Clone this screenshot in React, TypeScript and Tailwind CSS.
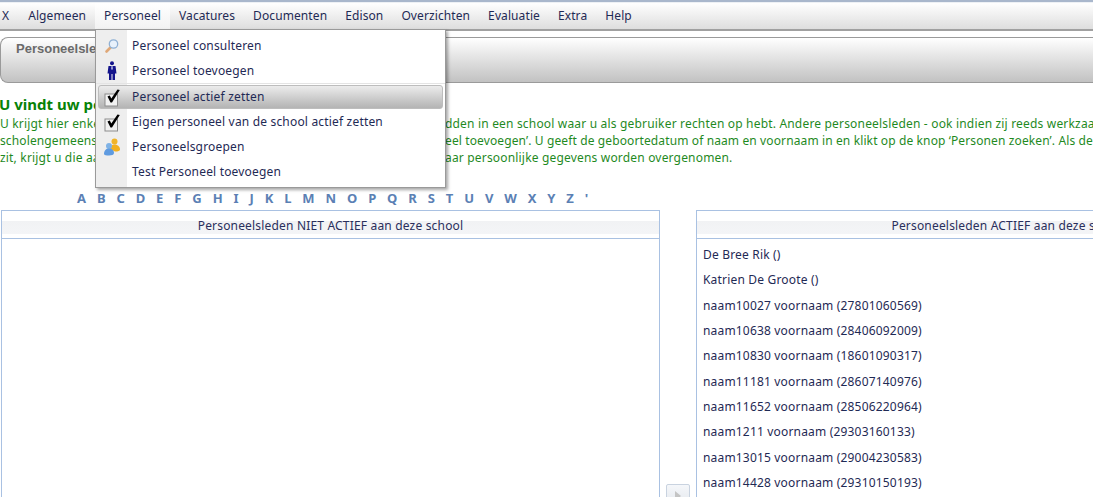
import React from "react";

const nav = ["X", "Algemeen", "Personeel", "Vacatures", "Documenten", "Edison", "Overzichten", "Evaluatie", "Extra", "Help"];
const letters = "A B C D E F G H I J K L M N O P Q R S T U V W X Y Z '".split(" ");
const people = [
  "De Bree Rik ()",
  "Katrien De Groote ()",
  "naam10027 voornaam (27801060569)",
  "naam10638 voornaam (28406092009)",
  "naam10830 voornaam (18601090317)",
  "naam11181 voornaam (28607140976)",
  "naam11652 voornaam (28506220964)",
  "naam1211 voornaam (29303160133)",
  "naam13015 voornaam (29004230583)",
  "naam14428 voornaam (29310150193)",
];

function Magnifier() {
  return (
    <svg width="16" height="16" viewBox="0 0 16 16">
      <path d="M6.500 9.500 2.500 13.500" stroke="#dfa878" strokeWidth="2.600" strokeLinecap="round" />
      <circle cx="9.500" cy="6" r="4.200" fill="#e8f1fb" stroke="#8fb0d4" strokeWidth="1.300" />
    </svg>
  );
}
function Man() {
  return (
    <svg width="10" height="19" viewBox="0 0 10 19">
      <circle cx="5" cy="2.200" r="2" fill="#14148c" />
      <path d="M1.500 5h7l1 7.500H8V19H5.500v-6h-1v6H2v-6.500H.5z" fill="#14148c" />
      <path d="M4.500 4.800h1l.3 3.600H4.200z" fill="#c8cdec" />
    </svg>
  );
}
function Check() {
  return (
    <svg width="18" height="20" viewBox="0 0 18 20">
      <rect x="2" y="7" width="12.500" height="12" fill="#f2f2f2" stroke="#8c8c8c" />
      <path d="M4.500 9.500 6.800 8.500 8.300 11.500 14.500 2.500 16.800 3 9 15.500H7.500z" fill="#000" />
    </svg>
  );
}
function Group() {
  return (
    <svg width="18" height="18" viewBox="0 0 18 18">
      <circle cx="11.500" cy="3.500" r="3" fill="#f0b429" />
      <path d="M7 11c0-3 2-4.500 4.500-4.500S17 8 17 11.500c0 1.500-2 2-5 2z" fill="#f2b01e" />
      <circle cx="6" cy="8" r="3" fill="#7fb2e5" />
      <path d="M1 16c0-3.500 2-5.500 5-5.500s5 2 5 4.500c0 1.800-2.500 2.500-5 2.500s-5-.5-5-1.500z" fill="#5f9be0" />
    </svg>
  );
}

const menu: { icon: React.ReactNode; label: string; active?: boolean }[] = [
  { icon: <Magnifier />, label: "Personeel consulteren" },
  { icon: <Man />, label: "Personeel toevoegen" },
  { icon: <Check />, label: "Personeel actief zetten", active: true },
  { icon: <Check />, label: "Eigen personeel van de school actief zetten" },
  { icon: <Group />, label: "Personeelsgroepen" },
  { icon: null, label: "Test Personeel toevoegen" },
];

function PanelHeader({ title }: { title: string }) {
  return (
    <div className="h-[28px] border-b border-[#a9c1e2] pt-[10px]">
      <div className="h-[13px] bg-gradient-to-b from-[#f1f2f4] to-[#f4f5f7] text-center text-[12px] leading-[9px] text-[#2a2f5c]">
        {title}
      </div>
    </div>
  );
}

export default function App() {
  return (
    <div className="relative h-[497px] w-full overflow-hidden bg-white font-['Noto_Sans',sans-serif] text-[12px] tracking-[0.18px] text-[#1f2a55]">
      <div className="h-[3px] border-t-2 border-[#a9b7cc] bg-[#eef1f5]" />
      <nav className="flex h-[28px] items-center border-b-2 border-[#a0a0a0] bg-gradient-to-b from-white to-[#dedede] pl-[2px] tracking-[0.1px]">
        {nav.map((n, i) => (
          <span
            key={n}
            className={
              n === "Personeel"
                ? "flex h-full items-center bg-gradient-to-b from-white to-[#f2f2f2] px-[9px]"
                : i === 0
                  ? "mr-[10px] flex h-full items-center"
                  : "flex h-full items-center px-[9px]"
            }
          >
            {n}
          </span>
        ))}
      </nav>

      <div className="mt-[6px] h-[46px] rounded-l-[8px] border-y border-l border-[#9a9a9a] bg-gradient-to-b from-white to-[#c2c2c2] pl-[15px] pt-[1px] font-['Liberation_Sans',sans-serif] text-[13px] font-bold tracking-normal text-[#6a6a6a]">
        Personeelsleden
      </div>

      <div className="mt-[11px] whitespace-nowrap text-[#1f8a1f]">
        <h1 className="ml-[-1px] text-[15px] leading-[21px] font-bold tracking-normal text-[#078207]">U vindt uw personeelsleden</h1>
        <p className="leading-[17px]">
          <span className="inline-block w-[445px] overflow-hidden align-bottom">U krijgt hier enkel de personeelsleden te zien die opdrachten</span>
          dden in een school waar u als gebruiker rechten op hebt. Andere personeelsleden - ook indien zij reeds werkzaam zijn
        </p>
        <p className="leading-[17px] tracking-[0.12px]">
          <span className="inline-block w-[445px] overflow-hidden align-bottom">scholengemeenschap - moet u eerst opzoeken via personeel</span>
          eel toevoegen’. U geeft de geboortedatum of naam en voornaam in en klikt op de knop ‘Personen zoeken’. Als de
        </p>
        <p className="leading-[17px]">
          <span className="inline-block w-[445px] overflow-hidden align-bottom">zit, krijgt u die aanduiding en kunnen zijn of haar gegevens</span>
          aar persoonlijke gegevens worden overgenomen.
        </p>
      </div>

      <div className="ml-[271px] mt-[2px] h-[19px] w-[141px] border border-[#a9c1e2]" />

      <div className="mt-[2px] flex h-[19px] items-center gap-[10.9px] pl-[77px] text-[13px] font-bold tracking-normal text-[#5b80b4]">
        {letters.map((l) => (
          <span key={l}>{l}</span>
        ))}
      </div>

      <div className="mt-[2px] flex items-stretch">
        <section className="ml-px h-[300px] w-[659px] shrink-0 border border-[#a9c1e2]">
          <PanelHeader title="Personeelsleden NIET ACTIEF aan deze school" />
        </section>
        <div className="flex w-[36px] shrink-0 justify-center pt-[274px]">
          <button className="flex h-[24px] w-[24px] items-center justify-center rounded-[2px] border border-[#c9d3e0] bg-gradient-to-b from-[#f5f7fa] to-[#e2e6ec]">
            <svg width="8" height="10" viewBox="0 0 8 10"><path d="M1 0l6 5-6 5z" fill="#c4c4c4" /></svg>
          </button>
        </div>
        <section className="h-[300px] w-[626px] shrink-0 border border-[#a9c1e2]">
          <PanelHeader title="Personeelsleden ACTIEF aan deze school" />
          <ul className="pl-[6px] pt-[3px]">
            {people.map((p) => (
              <li key={p} className="h-[25.35px] leading-[25px]">{p}</li>
            ))}
          </ul>
        </section>
      </div>

      <div className="absolute left-[95px] top-[29px] w-[351px] border border-[#9a9a9a] bg-white shadow-[2px_2px_3px_rgba(0,0,0,0.35)]">
        <div className="bg-[linear-gradient(to_right,#eeeeee_31px,#ffffff_31px)] py-[3px]">
          {menu.map((m, i) => (
            <React.Fragment key={m.label}>
              {i === 2 && <div className="mb-px h-px bg-[#e4e4e4]" />}
              <div
                className={
                  m.active
                    ? "mx-[2px] flex h-[24px] items-center rounded-[3px] border border-[#bdbdbd] bg-gradient-to-b from-[#ececec] to-[#b4b4b4]"
                    : "mx-[3px] flex h-[25px] items-center"
                }
              >
                <span className="flex w-[33px] shrink-0 justify-center pr-[7px]">{m.icon}</span>
                {m.label}
              </div>
            </React.Fragment>
          ))}
        </div>
      </div>
    </div>
  );
}
